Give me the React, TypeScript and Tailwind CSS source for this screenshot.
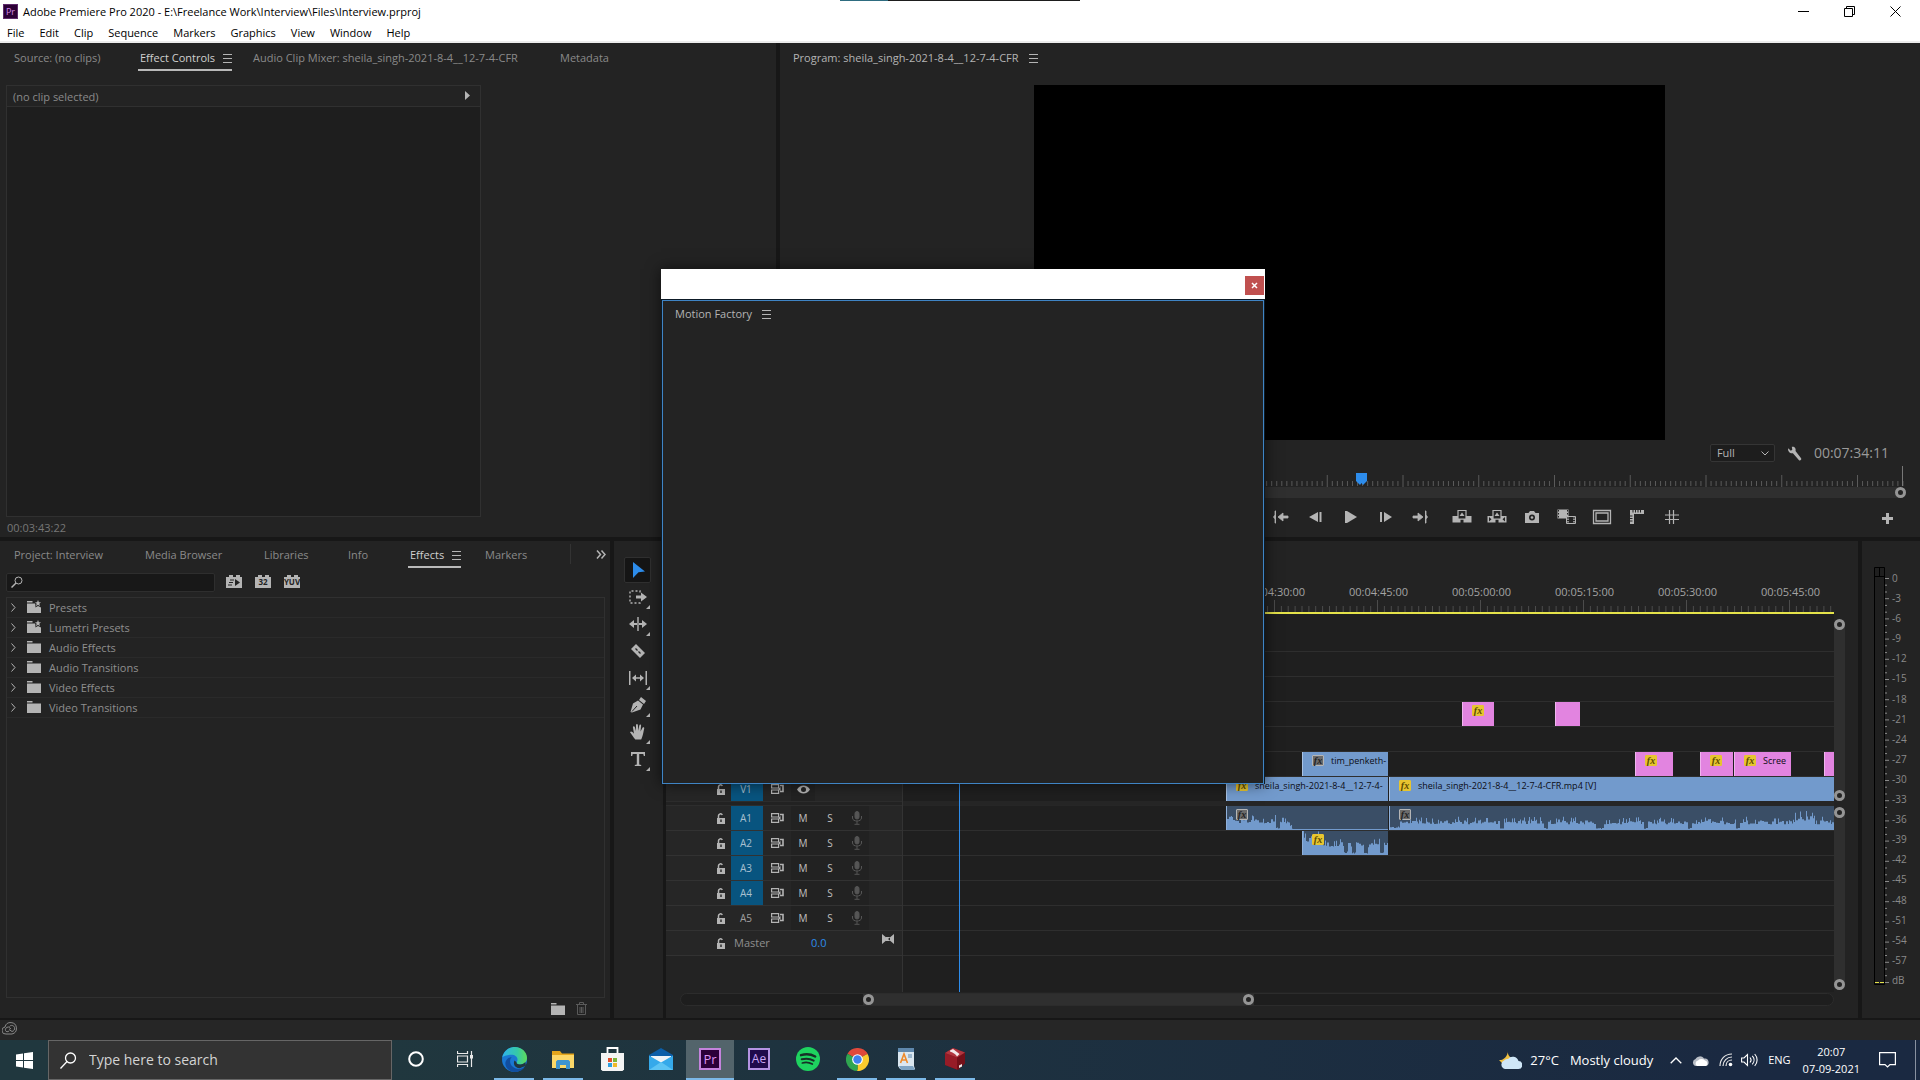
import type { ReactNode } from 'react';

/* ---------- shared bits ---------- */

function Burger() {
  return (
    <svg width="9" height="9" viewBox="0 0 9 9" aria-hidden="true">
      <path d="M0 .5h9M0 4.5h9M0 8.5h9" stroke="#b4b4b4" />
    </svg>
  );
}

function Tab({ label, active = false, bright = false, width }: { label: string; active?: boolean; bright?: boolean; width: string }) {
  return (
    <div className={`shrink-0 ${width}`}>
      <button
        className={`-ml-0.5 flex h-6 items-center whitespace-nowrap border-b-2 pl-0.5 ${
          active
            ? 'gap-2 border-[#b9b9b9] text-[#d0d0d0]'
            : bright
              ? 'gap-2.5 border-transparent text-[#b4b4b4]'
              : 'border-transparent text-[#8a8a8a]'
        }`}
      >
        {label}
        {(active || bright) && <Burger />}
      </button>
    </div>
  );
}

function Knob() {
  return <span className="block size-[11px] shrink-0 rounded-full border-[3px] border-[#959595] bg-[#232323]" />;
}

function Fx({ muted = false }: { muted?: boolean }) {
  return (
    <span
      className={`flex h-[11px] w-3 shrink-0 items-center justify-center rounded-[1px] border font-['Liberation_Serif',serif] text-[10px] leading-none font-bold italic ${
        muted ? 'border-[#b5b5b5] bg-[#6b6b6b] text-[#222]' : 'border-[#e7c52f] bg-[#e7c52f] text-[#5b4a00]'
      }`}
    >
      fx
    </span>
  );
}

/* ---------- title and menu ---------- */

const menus = ['File', 'Edit', 'Clip', 'Sequence', 'Markers', 'Graphics', 'View', 'Window', 'Help'];

function TitleBar() {
  return (
    <header className="shrink-0 border-b-2 border-[#ececec] bg-white text-[11px] text-black">
      <div className="flex h-[23px] items-center pl-[3px]">
        <span className="flex size-[15px] items-center justify-center border border-[#5e2a6b] bg-[#2c0036] text-[9px] leading-none text-[#d58be8]">Pr</span>
        <h1 className="ml-[5px] flex-1 whitespace-nowrap">Adobe Premiere Pro 2020 - E:\Freelance Work\Interview\Files\Interview.prproj</h1>
        <div className="mr-0.5 flex">
          <button aria-label="Minimize" className="flex h-5 w-[46px] items-center justify-center">
            <svg width="11" height="11" viewBox="0 0 11 11"><path d="M0 5.5h11" stroke="#000" /></svg>
          </button>
          <button aria-label="Restore" className="flex h-5 w-[46px] items-center justify-center">
            <svg width="11" height="11" viewBox="0 0 11 11" fill="none" stroke="#000"><path d="M.5 2.5h8v8h-8zM2.5 2.5v-2h8v8h-2" /></svg>
          </button>
          <button aria-label="Close" className="flex h-5 w-[46px] items-center justify-center">
            <svg width="11" height="11" viewBox="0 0 11 11" stroke="#000"><path d="M.5.5l10 10M10.500.5l-10 10" /></svg>
          </button>
        </div>
      </div>
      <nav className="flex h-[18px] items-end gap-px">
        {menus.map((m) => (
          <button key={m} className="px-[7px]">{m}</button>
        ))}
      </nav>
    </header>
  );
}

/* ---------- effect controls ---------- */

function EffectControls() {
  return (
    <section className="flex w-[776px] shrink-0 flex-col bg-[#232323] pt-1">
      <div className="flex pl-3.5">
        <Tab label="Source: (no clips)" width="w-[126px]" />
        <Tab label="Effect Controls" width="w-[113px]" active />
        <Tab label="Audio Clip Mixer: sheila_singh-2021-8-4__12-7-4-CFR" width="w-[307px]" />
        <Tab label="Metadata" width="w-auto" />
      </div>
      <div className="mt-3.5 ml-1.5 flex w-[475px] flex-1 flex-col border border-[#303030] bg-[#1e1e1e]">
        <div className="flex h-[21px] items-center justify-between border-b border-[#303030] bg-[#232323] pt-0.5 pr-2.5 pl-1.5 text-[#8a8a8a]">
          (no clip selected)
          <svg className="mb-1" width="5" height="9" viewBox="0 0 5 9"><path d="M0 0l5 4.500-5 4.500z" fill="#b4b4b4" /></svg>
        </div>
      </div>
      <div className="flex h-5 items-center pt-0.5 pl-[7px] text-[#777]">00:03:43:22</div>
    </section>
  );
}

/* ---------- program monitor ---------- */

const ic = '#b4b4b4';

const transport: { name: string; icon: ReactNode }[] = [
  { name: 'Go to In', icon: <path d="M4 2H3v4L1.500 8 3 10v4h1M6 8l5-4v3h5v2h-5v3z" stroke={ic} fill={ic} strokeWidth=".8" /> },
  { name: 'Step back', icon: <path d="M11 3v10L2 8zM12.500 3h2v10h-2z" fill={ic} /> },
  { name: 'Play', icon: <path d="M3 2h2l10 6-10 6H3z" fill={ic} /> },
  { name: 'Step forward', icon: <path d="M7 3v10l8-5zM3 3h2v10H3z" fill={ic} /> },
  { name: 'Go to Out', icon: <path d="M13 2h1v4l1.500 2L14 10v4h-1M11 8L6 4v3H1v2h5v3z" stroke={ic} fill={ic} strokeWidth=".8" /> },
];

const transport2: { name: string; icon: ReactNode }[] = [
  {
    name: 'Lift',
    icon: (
      <>
        <path d="M-1.500 7H4v3h8V7h5.500v6.500h-8v-3h-3v3h-8z" fill={ic} />
        <path d="M4 1.500h8V10H4z" fill="#232323" stroke={ic} strokeWidth="1.200" />
        <path d="M8 3.500L5.500 7h5z" fill={ic} />
      </>
    ),
  },
  {
    name: 'Extract',
    icon: (
      <>
        <path d="M-1.500 7H4v3h8V7h5.500v6.500h-8v-3h-3v3h-8z" fill={ic} />
        <path d="M4 1.500h8V10H4z" fill="#232323" stroke={ic} strokeWidth="1.200" />
        <path d="M8 3.500L5.500 7h5z" fill={ic} />
        <path d="M0 8l2.500 2.300L0 12.500zM16 8l-2.500 2.300 2.500 2.200z" fill="#232323" />
      </>
    ),
  },
  {
    name: 'Export frame',
    icon: (
      <>
        <path d="M1 4h3.500L6 2h4l1.500 2H15v10H1z" fill={ic} />
        <circle cx="8" cy="8.500" r="3" fill="#232323" />
        <circle cx="8" cy="8.500" r="1.300" fill={ic} />
      </>
    ),
  },
  {
    name: 'Comparison view',
    icon: (
      <>
        <path d="M-1.500.5h11v9h-11z" fill={ic} />
        <path d="M-.5 1v8M8.500 1v8" stroke="#232323" strokeDasharray="1.500 1.500" />
        <path d="M7.500 7.500h9v7h-9z" fill="#232323" stroke={ic} />
        <path d="M9 7v8M15 7v8" stroke={ic} strokeDasharray="1.500 1" strokeWidth="1.500" />
      </>
    ),
  },
  { name: 'Safe margins', icon: <path d="M-.5 1.500h17v13h-17zM2 4h12v8H2z" fill="none" stroke={ic} strokeWidth="1.300" /> },
  {
    name: 'Rulers',
    icon: (
      <>
        <path d="M1 1h14v4H5v10H1z" fill={ic} />
        <path d="M6.500 1v2.500M9 1v2.500M11.500 1v2.500M1 7h2.500M1 9.500h2.500M1 12h2.500M4 1v2.500" stroke="#232323" />
      </>
    ),
  },
  { name: 'Guides', icon: <path d="M5.500 1v14M9.500 1v14M1 6h14M1 10.500h14" stroke={ic} strokeWidth="1.200" /> },
];

function TransportButton({ name, icon }: { name: string; icon: ReactNode }) {
  return (
    <button aria-label={name} className="flex h-6 w-[35px] items-center justify-center">
      <svg width="16" height="16" viewBox="0 0 16 16" overflow="visible">{icon}</svg>
    </button>
  );
}

function ProgramMonitor() {
  const ticks = Array.from({ length: 220 }, (_, i) => i);
  return (
    <section className="flex min-w-0 flex-1 flex-col bg-[#232323] pt-1">
      <div className="flex pl-[13px]">
        <Tab label="Program: sheila_singh-2021-8-4__12-7-4-CFR" width="w-auto" bright />
      </div>
      <div className="mx-auto mt-3.5 flex w-[633px] flex-1 pr-0.5">
        <div className="flex-1 bg-black" />
      </div>
      <div className="mt-[3px] flex h-5 items-center justify-end gap-3 pr-[31px]">
        <label className="relative flex items-center">
          <select aria-label="Playback resolution" className="h-[18px] w-[65px] appearance-none rounded-xs border border-[#353535] bg-[#1d1d1d] pl-1.5 text-[11px] text-[#b4b4b4]">
            <option>Full</option>
          </select>
          <svg className="pointer-events-none absolute right-1.5" width="8" height="5" viewBox="0 0 8 5" fill="none"><path d="M.5.5L4 4 7.500.5" stroke={ic} /></svg>
        </label>
        <button aria-label="Settings">
          <svg width="15" height="15" viewBox="0 0 15 15">
            <path d="M1.200 2.200l2.600 2.500 1.500-1L4.800.8C7.300.1 9.300 2.300 8.500 4.900l5.400 7a1.400 1.400 0 0 1-2.100 2L5.900 7.200C3.200 7.800.4 5.300 1.200 2.200z" fill={ic} />
          </svg>
        </button>
        <span className="text-sm leading-5 text-[#9a9a9a]">00:07:34:11</span>
      </div>
      <svg className="h-6 w-full shrink-0" aria-hidden="true">
        {ticks.map((i) => (
          <path key={i} d={`M${17 + i * 5.05} ${i % 15 === 0 ? 12 : 18}v${i % 15 === 0 ? 12 : 5}`} stroke="#5a5a5a" />
        ))}
        <path d="M1122.500 3v20" stroke="#777" />
        <path d="M576 10h11v8l-4 4-1.500-2-1.500 2-4-4z" fill="#2d8ceb" />
      </svg>
      <div className="mr-3.5 ml-4 flex h-[11px] items-center justify-end rounded-full bg-[#2f2f2f]">
        <Knob />
      </div>
      <div className="flex h-[39px] items-center justify-between pr-[26px] pb-0.5 pl-[482px]">
        <div className="flex gap-[7px]">
          <div className="flex">{transport.map((t) => <TransportButton key={t.name} {...t} />)}</div>
          <div className="flex">{transport2.map((t) => <TransportButton key={t.name} {...t} />)}</div>
        </div>
        <button aria-label="Button editor" className="pt-1">
          <svg width="13" height="13" viewBox="0 0 13 13"><path d="M6.500 1v11M1 6.500h11" stroke={ic} strokeWidth="3" /></svg>
        </button>
      </div>
    </section>
  );
}

/* ---------- effects browser ---------- */

function Folder({ star = false }: { star?: boolean }) {
  return (
    <svg width="14" height="13" viewBox="0 0 14 13" aria-hidden="true">
      <path d="M0 1h5.500v1.500H0zM0 3.500h14V13H0z" fill={ic} />
      {star && (
        <>
          <path d="M8 0h6v7.500l-3-1.500-2.500 1.500z" fill="#232323" />
          <path d="M11 0l.9 2.200H14l-1.700 1.500.7 2.500L11 4.700 9 6.200l.7-2.500L8 2.200h2.100z" fill={ic} />
        </>
      )}
    </svg>
  );
}

const bins = [
  { name: 'Presets', star: true },
  { name: 'Lumetri Presets', star: true },
  { name: 'Audio Effects', star: false },
  { name: 'Audio Transitions', star: false },
  { name: 'Video Effects', star: false },
  { name: 'Video Transitions', star: false },
];

function FilterBadge({ label }: { label: string }) {
  return (
    <button aria-label={label || 'Accelerated effects'} className="flex flex-col pb-0.5">
      <span className="flex justify-around px-px">
        <i className="h-0.5 w-1 bg-[#b4b4b4]" />
        <i className="h-0.5 w-1 bg-[#b4b4b4]" />
      </span>
      <span className="flex h-[11px] w-4 items-center justify-center bg-[#b4b4b4] text-[8px] leading-none font-bold text-[#222]">
        {label || (
          <svg width="12" height="7" viewBox="0 0 12 7"><path d="M2 1h4M1 3.500h4M0 6h4" stroke="#222" /><path d="M7 0l5 3.500L7 7z" fill="#222" /></svg>
        )}
      </span>
    </button>
  );
}

function EffectsPanel() {
  return (
    <section className="flex w-[610px] shrink-0 flex-col bg-[#232323] pt-[3px]">
      <div className="flex pl-3.5">
        <Tab label="Project: Interview" width="w-[131px]" />
        <Tab label="Media Browser" width="w-[119px]" />
        <Tab label="Libraries" width="w-[84px]" />
        <Tab label="Info" width="w-[62px]" />
        <Tab label="Effects" width="w-[75px]" active />
        <Tab label="Markers" width="w-[85px]" />
        <div className="flex h-5 flex-1 items-center justify-end border-l border-[#333] pr-1">
          <button aria-label="More panels">
            <svg width="10" height="9" viewBox="0 0 10 9" fill="none"><path d="M1 .5l3.500 4L1 8.500M5.500.5l3.500 4-3.500 4" stroke={ic} strokeWidth="1.500" /></svg>
          </button>
        </div>
      </div>
      <div className="mt-1 flex h-5 items-center gap-[13px] pl-1.5">
        <label className="mr-[-2px] flex h-[19px] w-[209px] items-center rounded-xs border border-[#2e2e2e] bg-[#181818] pl-1">
          <svg width="12" height="12" viewBox="0 0 12 12" fill="none"><circle cx="7.500" cy="4.500" r="3.500" stroke={ic} /><path d="M5 7L.5 11.500" stroke={ic} strokeWidth="1.500" /></svg>
          <input type="search" aria-label="Search effects" className="h-full min-w-0 flex-1 bg-transparent px-1 text-[#b4b4b4] outline-none" />
        </label>
        <FilterBadge label="" />
        <FilterBadge label="32" />
        <FilterBadge label="YUV" />
      </div>
      <ul className="mt-[5px] mr-[5px] ml-1.5 flex-1 border border-[#303030]">
        {bins.map((b) => (
          <li key={b.name} className="flex h-5 items-center border-b border-[#2a2a2a] pl-1 text-[#8f8f8f]">
            <svg width="5" height="9" viewBox="0 0 5 9" fill="none"><path d="M.5.5l3.500 4-3.500 4" stroke={ic} /></svg>
            <span className="mr-2 ml-[11px] pb-0.5"><Folder star={b.star} /></span>
            {b.name}
          </li>
        ))}
      </ul>
      <div className="flex h-5 items-center justify-end gap-[11px] pr-[23px]">
        <button aria-label="New custom bin"><Folder /></button>
        <button aria-label="Delete">
          <svg width="11" height="13" viewBox="0 0 11 13" fill="none" stroke="#5a5a5a"><path d="M0 2.500h11M3.500 2V.5h4V2M1.500 3v9.500h8V3M4 5v6M5.500 5v6M7 5v6" /></svg>
        </button>
      </div>
    </section>
  );
}

/* ---------- tools ---------- */

const tools: { name: string; sub: boolean; icon: ReactNode }[] = [
  { name: 'Selection', sub: false, icon: <path d="M4 1l12 9.500-6.500.8L4 17z" fill="#2d8ceb" /> },
  {
    name: 'Track select forward',
    sub: true,
    icon: (
      <>
        <path d="M11 4.500V3H1v12h10v-2" fill="none" stroke={ic} strokeDasharray="2 2" strokeWidth="1.400" />
        <path d="M7 7.500h5V4.500L18 9l-6 4.500v-3H7z" fill={ic} />
      </>
    ),
  },
  { name: 'Ripple edit', sub: true, icon: <path d="M8.300 2h1.400v14H8.300zM0 9l5-4v3h3v2H5v3zM18 9l-5-4v3h-3v2h3v3z" fill={ic} /> },
  {
    name: 'Razor',
    sub: false,
    icon: (
      <>
        <path d="M7 2l9 9-5 5-9-9z" fill={ic} />
        <path d="M6.500 6.500l2 2M9.500 9.500l2 2" stroke="#232323" strokeWidth="1.300" />
      </>
    ),
  },
  {
    name: 'Slip',
    sub: true,
    icon: (
      <>
        <path d="M.7 2v14M17.300 2v14" stroke={ic} strokeWidth="1.600" />
        <path d="M3 9l4-3.500v2.800h4V5.500L15 9l-4 3.500V9.700H7v2.800z" fill={ic} />
      </>
    ),
  },
  {
    name: 'Pen',
    sub: true,
    icon: (
      <>
        <path d="M12 1l5 4-2 3-5-4zM9 4.500L14 8.500l-2.500 5L3 16.500 1.500 16 4 7.500z" fill={ic} />
        <path d="M3 15.500l5-5.500" stroke="#232323" />
      </>
    ),
  },
  {
    name: 'Hand',
    sub: true,
    icon: <path d="M6.300 16.500C4 13.500 2.500 11 1 9.200c.8-1.200 2.200-.8 4 1.500L3.900 4.200c0-1.300 1.500-1.400 1.900-.2L7 8V2c.2-1.200 1.700-1.200 1.900 0l.3 5.800L10.300 2.400c.4-1.200 1.800-1 1.800.4l-.6 5.700 2-3.700c.8-1 2-.4 1.700.8-.7 3-1 6-2.200 9l-.8 1.900z" fill={ic} />,
  },
  { name: 'Type', sub: true, icon: <path d="M2 2h14v4h-1.200l-.5-2h-4.100v10.500l2 .5v1H5.800v-1l2-.5V4H3.700l-.5 2H2z" fill={ic} /> },
];

function Tools() {
  return (
    <section className="flex w-[49px] shrink-0 flex-col items-center gap-px bg-[#232323] pt-4 pr-0.5">
      {tools.map((t, i) => (
        <button
          key={t.name}
          aria-label={t.name}
          className={`relative flex h-[26px] w-[27px] items-center justify-center rounded-xs border ${i === 0 ? 'border-[#303030] bg-[#151515]' : 'border-transparent'}`}
        >
          <svg width="18" height="18" viewBox="0 0 18 18">{t.icon}</svg>
          {t.sub && (
            <svg className="absolute right-0 bottom-0" width="4" height="4" viewBox="0 0 4 4"><path d="M4 0v4H0z" fill={ic} /></svg>
          )}
        </button>
      ))}
    </section>
  );
}

/* ---------- timeline ---------- */

function noise(n: number) {
  const s = Math.sin(n * 127.1 + 311.7) * 43758.5453;
  return s - Math.floor(s);
}

function wavePath(w: number, seed: number, level: (x: number) => number) {
  let d = 'M0 24';
  for (let x = 0; x < w; x += 1) {
    const gap = noise(Math.floor((x + seed) / 4) * 3.3 + seed) > 0.9 ? 0.2 : 1;
    const h = Math.max(1, level(x) * gap * (6 + 4 * noise(Math.floor(x / 2) + seed) + (noise(x + seed * 2) > 0.84 ? 4 : 0)));
    d += `L${x} ${(24 - h).toFixed(1)}h1`;
  }
  return `${d}V24z`;
}

type Clip = { x: number; w: number; label?: string; kind: 'blue' | 'pink' | 'audio'; fx?: 'on' | 'muted'; level?: (x: number) => number };

const fade = (x: number) => (x < 5 ? 1.8 : x < 58 ? 1.100 : x < 72 ? (72 - x) / 14 : 0);

const video: { id: string; clips: Clip[] }[] = [
  { id: 'V6', clips: [] },
  { id: 'V5', clips: [] },
  { id: 'V4', clips: [{ x: 559, w: 32, kind: 'pink', fx: 'on' }, { x: 652, w: 25, kind: 'pink' }] },
  { id: 'V3', clips: [] },
  {
    id: 'V2',
    clips: [
      { x: 399, w: 86, kind: 'blue', fx: 'muted', label: 'tim_penketh-' },
      { x: 732, w: 38, kind: 'pink', fx: 'on' },
      { x: 797, w: 33, kind: 'pink', fx: 'on' },
      { x: 831, w: 57, kind: 'pink', fx: 'on', label: 'Scree' },
      { x: 921, w: 10, kind: 'pink' },
    ],
  },
  {
    id: 'V1',
    clips: [
      { x: 323, w: 162, kind: 'blue', fx: 'on', label: 'sheila_singh-2021-8-4__12-7-4-' },
      { x: 486, w: 445, kind: 'blue', fx: 'on', label: 'sheila_singh-2021-8-4__12-7-4-CFR.mp4 [V]' },
    ],
  },
];

const audio: { id: string; clips: Clip[] }[] = [
  {
    id: 'A1',
    clips: [
      { x: 323, w: 162, kind: 'audio', fx: 'muted', level: fade },
      { x: 486, w: 445, kind: 'audio', fx: 'muted', level: (x) => (x < 10 ? 0.3 : x > 404 && x < 425 ? 1.4 : 0.95) },
    ],
  },
  { id: 'A2', clips: [{ x: 399, w: 86, kind: 'audio', fx: 'on', level: (x) => (x < 20 ? 1.9 : 1.300) }] },
  { id: 'A3', clips: [] },
  { id: 'A4', clips: [] },
  { id: 'A5', clips: [] },
];

function ClipBox({ clip }: { clip: Clip }) {
  const tone =
    clip.kind === 'pink' ? 'bg-[#e284e0] border-[#f0b4ee]' : clip.kind === 'blue' ? 'bg-[#729acc] border-[#a9c3e4]' : 'bg-[#3a4e66] border-[#8fb0da]';
  return (
    <div className={`absolute inset-y-0 overflow-hidden border-l ${tone}`} style={{ left: clip.x, width: clip.w }}>
      {clip.level && (
        <svg className="absolute inset-0" width={clip.w} height="24" aria-hidden="true">
          <path d={wavePath(clip.w, clip.x, clip.level)} fill="#729acc" />
        </svg>
      )}
      {clip.fx && (
        <div className="relative flex items-center gap-[7px] pt-[3px] pl-[9px]">
          <Fx muted={clip.fx === 'muted'} />
          {clip.label && <span className="text-[9px] leading-[11px] whitespace-nowrap text-[#0c0c14]">{clip.label}</span>}
        </div>
      )}
    </div>
  );
}

function Lock() {
  return (
    <svg width="8" height="11" viewBox="0 0 8 11" aria-hidden="true">
      <path d="M1.500 5.500V3A2 2 0 0 1 5.300 2" fill="none" stroke={ic} strokeWidth="1.500" />
      <path d="M0 5h8v6H0z" fill={ic} />
      <path d="M4 6.500V9" stroke="#232323" strokeWidth="1.400" />
    </svg>
  );
}

function SyncIcon() {
  return (
    <svg width="13" height="10" viewBox="0 0 13 10" fill="none" aria-hidden="true">
      <path d="M.6.6h7v3.400h-7zM.6 6h7v3.400h-7z" stroke={ic} strokeWidth="1.200" />
      <path d="M9 1.500h3v6H9" stroke={ic} strokeWidth="1.600" />
      <path d="M9.500 3v4L7 5z" fill={ic} />
    </svg>
  );
}

function TrackHeader({ id, targeted, isVideo = false }: { id: string; targeted: boolean; isVideo?: boolean }) {
  return (
    <div className={`flex h-[25px] items-center border-[#323232] bg-[#262626] pl-[51px] text-[10px] text-[#c0c0c0] ${isVideo ? 'border-t' : 'border-b'}`}>
      <button aria-label={`Lock ${id}`}><Lock /></button>
      <button className={`ml-1.5 h-full w-8 pr-0.5 ${targeted ? 'bg-[#08547f] text-[#a9c0d0]' : 'text-[#a0a0a0]'}`}>{id}</button>
      <button aria-label={`Sync lock ${id}`} className="flex w-7 justify-center"><SyncIcon /></button>
      {isVideo ? (
        <button aria-label={`Toggle ${id} output`} className="flex h-full w-6 items-center justify-center bg-[#222]">
          <svg width="13" height="9" viewBox="0 0 13 9"><path d="M0 4.500C3-.7 10-.7 13 4.500 10 9.700 3 9.700 0 4.500z" fill={ic} /><circle cx="6.500" cy="4.500" r="2.500" fill="#232323" /></svg>
        </button>
      ) : (
        <>
          <button className="h-full w-6 bg-[#222]">M</button>
          <button className="h-full w-[30px] bg-[#222]">S</button>
          <button aria-label={`Record ${id}`} className="flex h-full w-6 items-center justify-center bg-[#222]">
            <svg width="10" height="14" viewBox="0 0 10 14" fill="none" stroke="#555"><rect x="3" y=".5" width="4" height="7.500" rx="2" fill="#555" /><path d="M.5 5v2c0 4 9 4 9 0V5M5 10v3M2.500 13.300h5" /></svg>
          </button>
        </>
      )}
    </div>
  );
}

const times = ['00:04:30:00', '00:04:45:00', '00:05:00:00', '00:05:15:00', '00:05:30:00', '00:05:45:00'];

function Timeline() {
  return (
    <section className="flex min-w-0 flex-1 flex-col bg-[#232323] pt-[42px]">
      <div className="flex min-h-0 flex-1">
        <div className="w-[236px] shrink-0 pt-[193px]">
          <TrackHeader id="V1" targeted isVideo />
          <div className="h-[5px] border-y border-[#2d2d2d]" />
          {audio.map((t) => (
            <TrackHeader key={t.id} id={t.id} targeted={t.id !== 'A5'} />
          ))}
          <div className="flex h-[25px] items-center border-b border-[#323232] bg-[#262626] pl-[51px] text-[#8f8f8f]">
            <button aria-label="Lock Master"><Lock /></button>
            <span className="ml-[9px] w-[77px]">Master</span>
            <button className="text-[#2d8ceb]">0.0</button>
            <svg className="mr-2 mb-2 ml-auto" width="12" height="10" viewBox="0 0 12 10"><path d="M0 0l6 5-6 5zM12 0L6 5l6 5zM4 3h4v4H4z" fill={ic} /></svg>
          </div>
        </div>
        <div className="relative flex min-w-0 flex-1 flex-col overflow-hidden">
          <div className="flex h-[17px] items-center pl-[322px] text-[#a4a4a4]">
            {times.map((t) => (
              <span key={t} className="w-[103px] shrink-0 text-center">{t}</span>
            ))}
          </div>
          <svg className="h-3 w-full shrink-0" aria-hidden="true">
            {Array.from({ length: 136 }, (_, i) => i - 4).map((i) => (
              <path key={i} d={`M${(63.5 + i * 6.867).toFixed(1)} ${i % 15 === 0 ? 0 : 6}V12`} stroke="#4c4c4c" />
            ))}
          </svg>
          <div className="h-0.5 shrink-0 bg-[#e4e24a]" />
          <div className="flex-1 border-l border-[#333] bg-[#1f1f1f]">
            <div className="h-[37px]" />
            {video.map((t) => (
              <div key={t.id} className="h-[25px] border-t border-[#2e2e2e]">
                <div className="relative h-6">{t.clips.map((c) => <ClipBox key={c.x} clip={c} />)}</div>
              </div>
            ))}
            <div className="h-[5px] bg-[#262626]" />
            {audio.map((t) => (
              <div key={t.id} className="h-[25px] border-b border-[#2e2e2e]">
                <div className="relative h-6">{t.clips.map((c) => <ClipBox key={c.x} clip={c} />)}</div>
              </div>
            ))}
            <div className="h-[25px] border-b border-[#2e2e2e]" />
          </div>
          <div className="absolute top-[31px] bottom-0 left-[57px] w-px bg-[#2d8ceb]" />
        </div>
        <div className="flex w-6 shrink-0 flex-col gap-1.5 pt-9 pb-0.5">
          <div className="flex h-[182px] w-[11px] flex-col justify-between rounded-full bg-[#2f2f2f]"><Knob /><Knob /></div>
          <div className="flex w-[11px] flex-1 flex-col justify-between rounded-full bg-[#2f2f2f]"><Knob /><Knob /></div>
        </div>
      </div>
      <div className="mt-px mr-6 mb-3 ml-3.5 flex h-[13px] items-center rounded-full border border-[#2c2c2c] bg-[#1e1e1e]">
        <div className="ml-[182px] flex h-[11px] w-[391px] justify-between bg-[#2f2f2f]"><Knob /><Knob /></div>
      </div>
    </section>
  );
}

/* ---------- audio meter ---------- */

function Meter() {
  const labels = [...Array.from({ length: 20 }, (_, i) => (i === 0 ? '0' : `-${i * 3}`)), 'dB'];
  return (
    <section className="flex w-[58px] shrink-0 bg-[#232323] pt-[26px]">
      <svg className="ml-3 h-[420px] w-4 shrink-0" viewBox="0 0 16 420" aria-hidden="true">
        <path d="M.5.5h10v417H.5z" fill="#1f1f1f" stroke="#000" />
        <path d="M.5 9.500h10M5.500.5v9" stroke="#000" />
        {Array.from({ length: 61 }, (_, i) => (
          <path key={i} d={`M11 ${(11.5 + i * 6.733).toFixed(1)}h${i % 3 === 0 ? 4 : 2}`} stroke="#8a8a8a" />
        ))}
        <path d="M1 415.500h4M6 415.500h4" stroke="#e4e24a" />
      </svg>
      <div className="mt-1 ml-0.5 flex h-[416px] flex-col justify-between text-[10px] leading-[14px] text-[#8a8a8a]">
        {labels.map((l) => <span key={l}>{l}</span>)}
      </div>
    </section>
  );
}

/* ---------- floating panel ---------- */

function MotionFactory() {
  return (
    <div role="dialog" aria-label="Motion Factory" className="absolute top-[269px] left-[661px] flex h-[515px] w-[604px] flex-col bg-[#0d1a26] shadow-[0_0_14px_rgba(0,0,0,0.6)]">
      <div className="flex h-[30px] shrink-0 items-center justify-end bg-white pt-0.5 pr-px">
        <button aria-label="Close panel" className="flex h-[19px] w-[19px] items-center justify-center bg-[#c0504f]">
          <svg width="7" height="7" viewBox="0 0 7 7"><path d="M1 1l5 5M6 1L1 6" stroke="#fff" strokeWidth="1.500" /></svg>
        </button>
      </div>
      <div className="mx-px mt-px flex-1 border border-[#3f84c4] bg-[#232323] pt-0.5 pl-3">
        <Tab label="Motion Factory" width="w-auto" bright />
      </div>
    </div>
  );
}

/* ---------- taskbar ---------- */

const apps: { name: string; running?: boolean; active?: boolean; icon: ReactNode }[] = [
  { name: 'Cortana', icon: <svg width="18" height="18" viewBox="0 0 18 18"><circle cx="9" cy="9" r="6.800" fill="none" stroke="#fff" strokeWidth="2" /></svg> },
  {
    name: 'Task view',
    icon: (
      <svg width="17" height="16" viewBox="0 0 17 16" fill="none" stroke="#e8e8e8">
        <path d="M.5 0v2.500h10V0M.5 16v-2.500h10V16M.5 5h10v6H.5zM14.500 0v16" strokeWidth="1.200" />
        <path d="M13 4h3v3.500h-3z" fill="#e8e8e8" stroke="none" />
      </svg>
    ),
  },
  {
    name: 'Microsoft Edge',
    running: true,
    icon: (
      <svg width="25" height="25" viewBox="0 0 24 24">
        <defs>
          <linearGradient id="edgeTop" x1="0" x2="1"><stop offset="0" stopColor="#2fb4ea" /><stop offset=".6" stopColor="#35c8a8" /><stop offset="1" stopColor="#5fdc58" /></linearGradient>
        </defs>
        <circle cx="12" cy="12" r="12" fill="#1a77d2" />
        <path d="M.3 10C2 2.500 8 0 12.500 0 19 0 24 5 24 10.500c0 3.800-3 6.200-6.500 6.200-2.500 0-4-.9-3.400-2.100 2.300-3.600-.6-7.100-5.100-7.100C5 7.500 1.500 9 .3 10z" fill="url(#edgeTop)" />
        <path d="M9.500 9.500C6 12.500 7.500 20.500 16.500 21c2 0 4-.8 5.300-2-2.300 3.800-5.800 5-9.600 5C5 23.500 1.500 17 4 13c1.200-2 3.300-3.300 5.500-3.500z" fill="#124e9e" />
        <path d="M14 14.600c-.6 1.200.9 2.100 3.400 2.100 2 0 3.800-.8 5-2.200l.6 3.500-6 2.500c-5-.5-6.500-4.500-5-7.500z" fill="#21363e" />
      </svg>
    ),
  },
  {
    name: 'File Explorer',
    running: true,
    icon: (
      <svg width="22" height="19" viewBox="0 0 22 19">
        <path d="M0 1h8l2 2.500h12V18H0z" fill="#e3a51c" /><path d="M0 5h22v13H0z" fill="#fbd768" />
        <path d="M4 19v-7.500L5.500 10h11l1.500 1.500V19h-4v-4H8v4z" fill="#3f94cf" />
      </svg>
    ),
  },
  {
    name: 'Microsoft Store',
    icon: (
      <svg width="23" height="24" viewBox="0 0 23 24">
        <path d="M6.500 7V1h10v6" fill="none" stroke="#fff" strokeWidth="1.800" /><path d="M0 6h23v16.500L21.500 24H1.500L0 22.500z" fill="#f4f4f4" />
        <path d="M7 11h4v4H7z" fill="#e2502c" /><path d="M12 11h4v4h-4z" fill="#7cb63a" /><path d="M7 16h4v4H7z" fill="#2f9fe0" /><path d="M12 16h4v4h-4z" fill="#f0b928" />
      </svg>
    ),
  },
  {
    name: 'Mail',
    icon: (
      <svg width="24" height="22" viewBox="0 0 24 22">
        <path d="M0 7l12-7 12 7v4H0z" fill="#0c5ea8" /><path d="M2 8h20v8H2z" fill="#eef3f7" /><path d="M0 7.500l12 7 12-7V22H0z" fill="#35a9ea" /><path d="M24 22H0l12-8z" fill="#5cc4f4" />
      </svg>
    ),
  },
  { name: 'Premiere Pro', running: true, active: true, icon: <span className="flex size-[22px] items-center justify-center border-2 border-[#c583dd] bg-[#2b0038] text-[13px] leading-none text-[#dc93f0]">Pr</span> },
  { name: 'After Effects', icon: <span className="flex size-[22px] items-center justify-center border-2 border-[#b493e2] bg-[#1f0a4b] text-[12px] leading-none text-[#c9a7f5]">Ae</span> },
  {
    name: 'Spotify',
    icon: (
      <svg width="24" height="24" viewBox="0 0 24 24" fill="none" stroke="#173027" strokeLinecap="round">
        <circle cx="12" cy="12" r="12" fill="#1ed35f" stroke="none" />
        <path d="M5 8.200c5-1.500 10-1 14.200 1.300" strokeWidth="2.400" /><path d="M5.700 12.300c4.300-1.200 8.500-.7 12 1.300" strokeWidth="2" /><path d="M6.300 16c3.500-1 7-.6 10 1.100" strokeWidth="1.700" />
      </svg>
    ),
  },
  {
    name: 'Chrome',
    running: true,
    icon: (
      <svg width="23" height="23" viewBox="0 0 24 24">
        <path d="M12 12L1.600 6A12 12 0 0 1 22.400 6z" fill="#e0493b" /><path d="M12 12L22.400 6A12 12 0 0 1 12 24z" fill="#fbcb2d" /><path d="M12 12v12A12 12 0 0 1 1.600 6z" fill="#2fa650" />
        <path d="M12 6.500h10.700L21 4H12z" fill="#e0493b" /><path d="M16.800 14.700L11.500 24l2.500-.2 5-7z" fill="#fbcb2d" />
        <circle cx="12" cy="12" r="5.600" fill="#fff" /><circle cx="12" cy="12" r="4.400" fill="#3f80ee" />
      </svg>
    ),
  },
  {
    name: 'WordPad',
    running: true,
    icon: (
      <svg width="18" height="22" viewBox="0 0 18 22">
        <path d="M1 0h16v18l1 3H3l-2-3z" fill="#dbe7f0" /><path d="M1 0h16v4H1z" fill="#5f88ad" /><path d="M2 18h14l2 4H4z" fill="#7fa5c4" />
        <path d="M3.500 15L7 6l3.500 9M4.800 12h4.400" fill="none" stroke="#ee8a2a" strokeWidth="1.600" /><path d="M11 7h4M11 9h4" stroke="#5f88ad" />
      </svg>
    ),
  },
  {
    name: 'Toolbox',
    running: true,
    icon: (
      <svg width="21" height="22" viewBox="0 0 21 22">
        <path d="M0 5L8 0l12 4.500v11L13 22 0 17z" fill="#741019" /><path d="M0 5l12 4.500V21.500L0 17z" fill="#971c27" /><path d="M0 5L8 0l12 4.500-8 5z" fill="#b23740" />
        <path d="M5 2.500L8 1l6.500 5L12 8.500C11 6.500 8.500 4.500 5 3.500z" fill="#f4eaea" /><path d="M14 17.500l3-1.500v2.500L14 20z" fill="#f4eaea" />
      </svg>
    ),
  },
];

function Taskbar() {
  return (
    <footer className="flex h-10 shrink-0 bg-linear-to-r from-[#20373e] from-20% to-[#1a2941] to-90% text-white">
      <button aria-label="Start" className="flex w-12 shrink-0 items-center justify-center">
        <svg width="17" height="17" viewBox="0 0 17 17"><path d="M0 2.400l7-1V8H0zM8 1.200L17 0v8H8zM0 9h7v6.600l-7-1zM8 9h9v8l-9-1.200z" fill="#fff" /></svg>
      </button>
      <label className="flex w-[344px] shrink-0 items-center gap-3 border border-[#666] bg-[#333] pl-[11px]">
        <svg width="17" height="17" viewBox="0 0 17 17" fill="none" stroke="#fff" strokeWidth="1.300"><circle cx="10.500" cy="6" r="5" /><path d="M7 9.500L.5 16.500" /></svg>
        <input type="text" placeholder="Type here to search" className="min-w-0 flex-1 bg-transparent text-sm text-white outline-none placeholder:text-[#d4d4d4] placeholder:opacity-100" />
      </label>
      <nav className="flex gap-px">
        {apps.map((a) => (
          <button key={a.name} aria-label={a.name} className={`flex w-12 flex-col items-center ${a.active ? 'bg-[#53646b]' : ''}`}>
            <span className="flex flex-1 items-center justify-center">{a.icon}</span>
            <i className={`h-0.5 ${a.running ? 'bg-[#7cb9e8]' : 'bg-transparent'} ${a.active ? 'w-full' : 'w-10'}`} />
          </button>
        ))}
      </nav>
      <div className="ml-auto flex items-center">
        <svg width="23" height="20" viewBox="0 0 23 20">
          <path d="M9 0c-1 5 2 8 6 8.500L11 14 5 15 0 10c4 .5 9-3 9-10z" fill="#f0c040" />
          <path d="M6 19a4.500 4.500 0 0 1-1-8.500 4 4 0 0 1 4-1.500 6 6 0 0 1 10.500 2A4 4 0 0 1 19 19z" fill="#cfe6f7" />
        </svg>
        <span className="ml-2 text-[13px]">27°C</span>
        <span className="ml-[11px] text-[13px]">Mostly cloudy</span>
        <button aria-label="Show hidden icons" className="ml-[17px]"><svg width="12" height="7" viewBox="0 0 12 7" fill="none"><path d="M.7 6.300L6 1l5.300 5.300" stroke="#fff" strokeWidth="1.300" /></svg></button>
        <svg className="ml-2.5" width="17" height="11" viewBox="0 0 17 11"><path d="M4 11a3.600 3.600 0 0 1-.5-7A5 5 0 0 1 12 3.500a3.800 3.800 0 0 1 1.500 7.500z" fill="#b9bec6" /><path d="M5 11a3 3 0 0 1 1-5.500 5 5 0 0 1 7 0A3 3 0 0 1 14 11z" fill="#fff" /></svg>
        <svg className="ml-2.5" width="14" height="14" viewBox="0 0 14 14" fill="none" stroke="#e6e6e6" strokeWidth="1.200"><path d="M1 13C1 6 6 1 13 1M4 13c0-5 4-9 9-9M7 13c0-3.500 2.500-6 6-6" /><circle cx="11.500" cy="11.500" r="1.800" fill="#fff" stroke="none" /></svg>
        <svg className="ml-2" width="17" height="14" viewBox="0 0 17 14" fill="none" stroke="#fff" strokeWidth="1.100"><path d="M.6 5v4H3l3.500 3.500v-11L3 5zM9 4.500c1.300 1.500 1.300 3.500 0 5M11.300 2.800c2.300 2.500 2.300 6 0 8.500M13.700 1c3.200 3.500 3.200 8.500 0 12" /></svg>
        <span className="ml-2.5 text-[11px]">ENG</span>
        <div className="ml-3 text-center text-[11px] leading-[17px]">
          <div>20:07</div>
          <div>07-09-2021</div>
        </div>
        <button aria-label="Notifications" className="mx-[19px]"><svg width="17" height="16" viewBox="0 0 17 16" fill="none" stroke="#fff" strokeWidth="1.200"><path d="M.6.6h15.800v12H11L8.500 15 6 12.600H.6z" /></svg></button>
        <i className="mr-1 h-10 w-px bg-[#8891a0]" />
      </div>
    </footer>
  );
}

/* ---------- app ---------- */

export default function App() {
  return (
    <div className="relative flex h-screen flex-col overflow-hidden bg-[#171717] font-['Open_Sans','Noto_Sans',sans-serif] text-[11px] leading-4">
      <TitleBar />
      <div className="absolute top-0 left-1/2 flex h-px w-60 -translate-x-1/2 bg-[#1d1d1d]"><i className="w-12 bg-[#2e6c80]" /></div>
      <div className="flex h-[494px] shrink-0 gap-1">
        <EffectControls />
        <ProgramMonitor />
      </div>
      <div className="mt-1 flex min-h-0 flex-1 gap-1">
        <EffectsPanel />
        <Tools />
        <div className="-ml-px flex min-w-0 flex-1 gap-1">
          <Timeline />
          <Meter />
        </div>
      </div>
      <div className="mt-0.5 flex h-5 shrink-0 items-start bg-[#262626] pt-0.5 pl-0.5">
        <svg width="16" height="13" viewBox="0 0 16 13" fill="none" stroke="#8a8a8a"><path d="M4 12a3.500 3.500 0 0 1-1-7A5.800 5.800 0 1 1 10 12z" /><path d="M7 7.500l3 2c2-.5 3-2 2.500-4S9 2.500 7.500 4.500M9 7L6.500 5C4 5 3 7 3.500 8.500S6 10 7 9" /></svg>
      </div>
      <Taskbar />
      <MotionFactory />
    </div>
  );
}
